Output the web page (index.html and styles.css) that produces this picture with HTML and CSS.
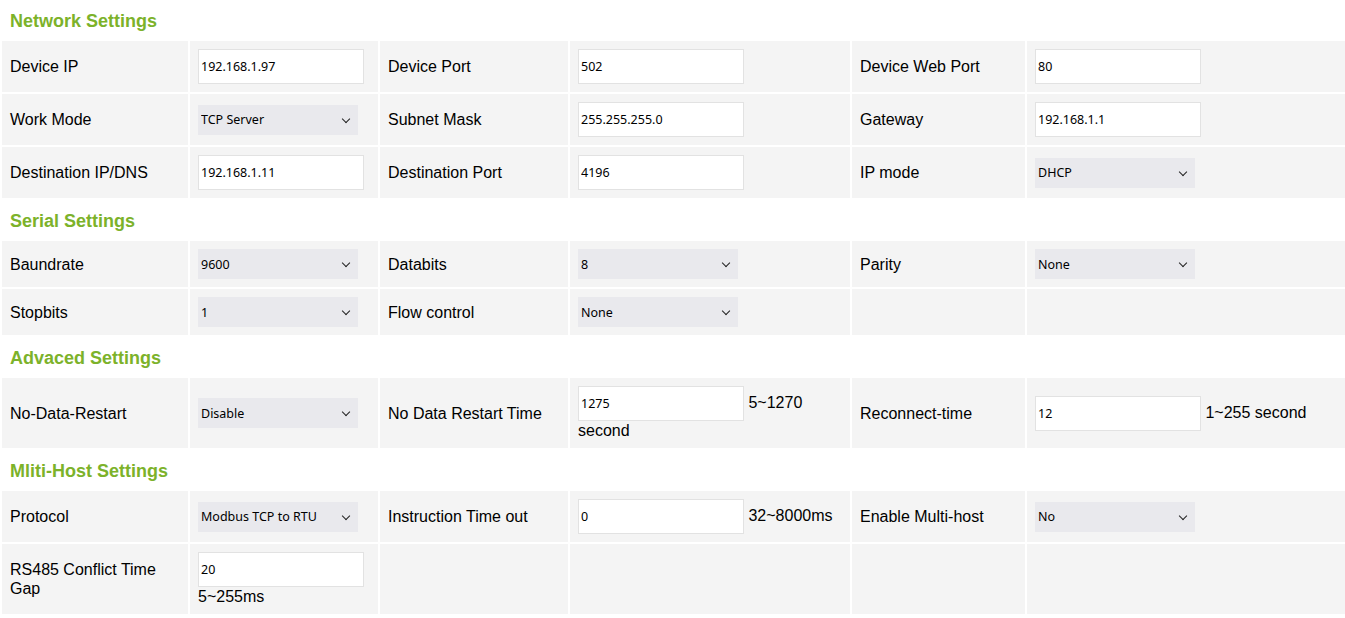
FILE: index.html
```html
<!DOCTYPE html>
<html lang="en">
<head>
    <meta charset="UTF-8">
    <title>Settings</title>
    <link rel="stylesheet" href="styles.css">
</head>
<body>

<!-- Network -->
<h3 class="section-title">Network Settings</h3>
<table class="settings">
  <colgroup>
    <col class="c1"><col class="c2"><col class="c3"><col class="c4"><col class="c5"><col>
  </colgroup>
  <tr>
    <td>Device IP</td>
    <td><input type="text" value="192.168.1.97"></td>
    <td>Device Port</td>
    <td><input type="text" value="502"></td>
    <td>Device Web Port</td>
    <td><input type="text" value="80"></td>
  </tr>
  <tr>
    <td>Work Mode</td>
    <td><span class="sel"><select><option>TCP Server</option><option>TCP Client</option><option>UDP</option></select></span></td>
    <td>Subnet Mask</td>
    <td><input type="text" value="255.255.255.0"></td>
    <td>Gateway</td>
    <td><input type="text" value="192.168.1.1"></td>
  </tr>
  <tr>
    <td>Destination IP/DNS</td>
    <td><input type="text" value="192.168.1.11"></td>
    <td>Destination Port</td>
    <td><input type="text" value="4196"></td>
    <td>IP mode</td>
    <td><span class="sel wide"><select><option>DHCP</option><option>Static</option></select></span></td>
  </tr>
</table>

<!-- Serial -->
<h3 class="section-title">Serial Settings</h3>
<table class="settings">
  <colgroup>
    <col class="c1"><col class="c2"><col class="c3"><col class="c4"><col class="c5"><col>
  </colgroup>
  <tr>
    <td>Baundrate</td>
    <td><span class="sel"><select><option>9600</option><option>19200</option><option>115200</option></select></span></td>
    <td>Databits</td>
    <td><span class="sel wide"><select><option>8</option><option>7</option></select></span></td>
    <td>Parity</td>
    <td><span class="sel wide"><select><option>None</option><option>Odd</option><option>Even</option></select></span></td>
  </tr>
  <tr>
    <td>Stopbits</td>
    <td><span class="sel"><select><option>1</option><option>2</option></select></span></td>
    <td>Flow control</td>
    <td><span class="sel wide"><select><option>None</option><option>RTS/CTS</option></select></span></td>
    <td></td>
    <td></td>
  </tr>
</table>

<!-- Advanced -->
<h3 class="section-title">Advaced Settings</h3>
<table class="settings">
  <colgroup>
    <col class="c1"><col class="c2"><col class="c3"><col class="c4"><col class="c5"><col>
  </colgroup>
  <tr>
    <td>No-Data-Restart</td>
    <td><span class="sel"><select><option>Disable</option><option>Enable</option></select></span></td>
    <td>No Data Restart Time</td>
    <td><input type="text" value="1275"> 5~1270 second</td>
    <td>Reconnect-time</td>
    <td><input type="text" value="12"> 1~255 second</td>
  </tr>
</table>

<!-- Multi host -->
<h3 class="section-title">Mliti-Host Settings</h3>
<table class="settings">
  <colgroup>
    <col class="c1"><col class="c2"><col class="c3"><col class="c4"><col class="c5"><col>
  </colgroup>
  <tr>
    <td>Protocol</td>
    <td><span class="sel"><select><option>Modbus TCP to RTU</option><option>None</option></select></span></td>
    <td>Instruction Time out</td>
    <td><input type="text" value="0"> 32~8000ms</td>
    <td>Enable Multi-host</td>
    <td><span class="sel wide"><select><option>No</option><option>Yes</option></select></span></td>
  </tr>
  <tr>
    <td>RS485 Conflict Time Gap</td>
    <td><input type="text" value="20"> 5~255ms</td>
    <td></td>
    <td></td>
    <td></td>
    <td></td>
  </tr>
</table>

</body>
</html>
```

FILE: styles.css
```css
* {
  box-sizing: border-box;
}

html, body {
  margin: 0;
  background: #fff;
  overflow: hidden;
}

body {
  font-family: 'Liberation Sans', Arial, sans-serif;
  font-size: 16px;
  color: #000;
}

.section-title {
  margin: 0;
  padding: 3px 10px 0;
  height: 39px;
  line-height: 36px;
  font-size: 18px;
  font-weight: bold;
  color: #7cb22a;
}

/* settings tables */
.settings {
  table-layout: fixed;
  width: calc(100% + 2px);
  border-collapse: separate;
  border-spacing: 2px;
}

.settings .c1 { width: 186px; }
.settings .c2 { width: 188px; }
.settings .c3 { width: 188px; }
.settings .c4 { width: 280px; }
.settings .c5 { width: 173px; }

.settings td {
  background: #f4f4f4;
  padding: 8px;
  vertical-align: middle;
  line-height: 19px;
}

.settings input[type="text"] {
  width: 166px;
  height: 35px;
  margin: 0;
  padding: 0 2px;
  border: 1px solid #e2e2e2;
  background: #fff;
  font-family: 'Noto Sans', 'Open Sans', sans-serif;
  font-size: 12.5px;
  color: #000;
  vertical-align: baseline;
  outline: none;
}

/* select with drawn chevron */
.sel {
  position: relative;
  display: inline-block;
  vertical-align: middle;
}

.sel select {
  -webkit-appearance: none;
  appearance: none;
  width: 160px;
  height: 30px;
  margin: 0;
  padding: 0 20px 0 3px;
  border: none;
  border-radius: 0;
  background: #e9e9ed;
  font-family: 'Noto Sans', 'Open Sans', sans-serif;
  font-size: 12.5px;
  color: #000;
  outline: none;
}

.sel::after {
  content: '';
  position: absolute;
  right: 9px;
  top: 11px;
  width: 5px;
  height: 5px;
  border-right: 1.5px solid #222;
  border-bottom: 1.5px solid #222;
  transform: rotate(45deg);
  pointer-events: none;
}
```
